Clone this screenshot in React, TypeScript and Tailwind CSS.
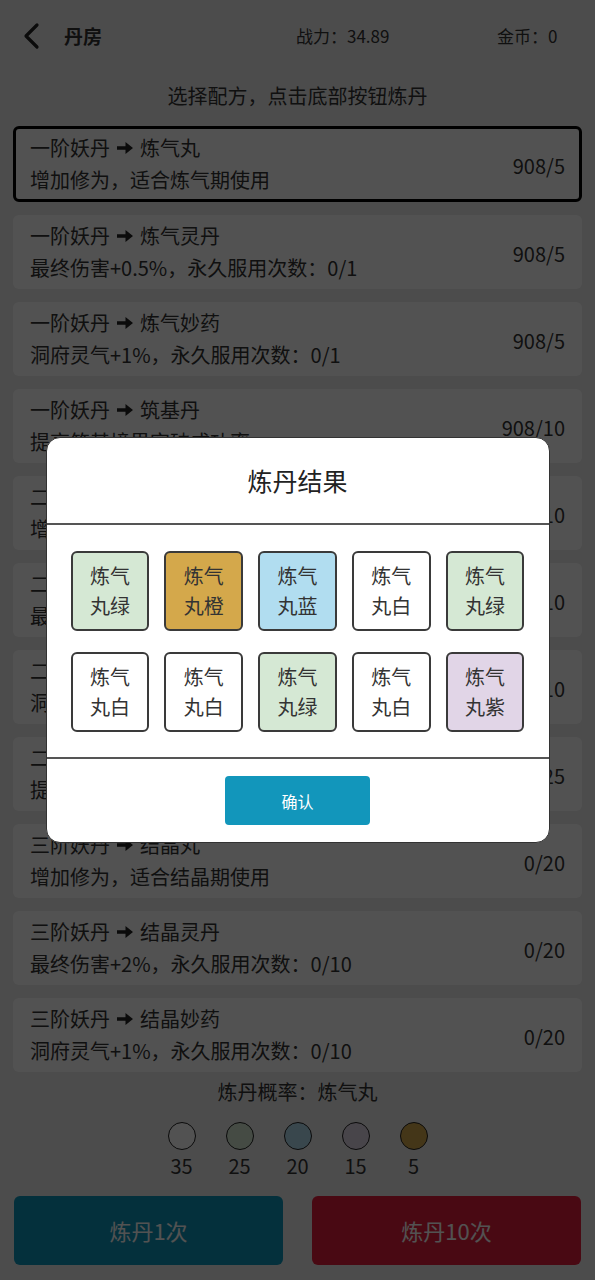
import React from "react";

const rows = [
  { from: "一阶妖丹", to: "炼气丸", desc: "增加修为，适合炼气期使用", num: "908/5" },
  { from: "一阶妖丹", to: "炼气灵丹", desc: "最终伤害+0.5%，永久服用次数：0/1", num: "908/5" },
  { from: "一阶妖丹", to: "炼气妙药", desc: "洞府灵气+1%，永久服用次数：0/1", num: "908/5" },
  { from: "一阶妖丹", to: "筑基丹", desc: "提高筑基境界突破成功率", num: "908/10" },
  { from: "二阶妖丹", to: "筑基丸", desc: "增加修为，适合筑基期使用", num: "0/10" },
  { from: "二阶妖丹", to: "筑基灵丹", desc: "最终伤害+1%，永久服用次数：0/5", num: "0/10" },
  { from: "二阶妖丹", to: "筑基妙药", desc: "洞府灵气+1%，永久服用次数：0/5", num: "0/10" },
  { from: "二阶妖丹", to: "结晶丹", desc: "提高结晶境界突破成功率", num: "0/25" },
  { from: "三阶妖丹", to: "结晶丸", desc: "增加修为，适合结晶期使用", num: "0/20" },
  { from: "三阶妖丹", to: "结晶灵丹", desc: "最终伤害+2%，永久服用次数：0/10", num: "0/20" },
  { from: "三阶妖丹", to: "结晶妙药", desc: "洞府灵气+1%，永久服用次数：0/10", num: "0/20" },
];

const colorMap: Record<string, string> = {
  绿: "bg-[#d5e8d4]",
  橙: "bg-[#d4a84b]",
  蓝: "bg-[#b1ddf0]",
  白: "bg-white",
  紫: "bg-[#e1d5e7]",
};

const results = ["绿", "橙", "蓝", "白", "绿", "白", "白", "绿", "白", "紫"];

const probs = [
  { c: "bg-white", n: "35" },
  { c: "bg-[#d5e8d4]", n: "25" },
  { c: "bg-[#b1ddf0]", n: "20" },
  { c: "bg-[#e1d5e7]", n: "15" },
  { c: "bg-[#d4a84b]", n: "5" },
];

function Arrow() {
  return (
    <svg width="18" height="16" viewBox="0 0 18 16" className="mx-[6px] shrink-0">
      <path d="M1 6.3 H9.5 V2 L17 8 L9.5 14 V9.7 H1 Z" fill="#222" />
    </svg>
  );
}

function Tile({ k }: { k: string }) {
  return (
    <div
      className={`w-[79px] h-[80px] rounded-[6px] border-2 border-[#3a3a3a] flex flex-col items-center justify-center text-[20px] leading-[30px] text-[#333] ${colorMap[k]}`}
    >
      <span>炼气</span>
      <span>丸{k}</span>
    </div>
  );
}

export default function App() {
  return (
    <div className="relative w-[595px] h-[1280px] overflow-hidden bg-[#ededed] text-[#333] font-['Noto_Sans_CJK_SC',sans-serif]">
      {/* header */}
      <div className="h-[72px] flex items-center pl-[22px]">
        <div className="w-[274px] flex items-center">
          <svg width="18" height="28" viewBox="0 0 18 28">
            <path d="M15 3 L4 14 L15 25" fill="none" stroke="#222" strokeWidth="3.2" strokeLinecap="round" strokeLinejoin="round" />
          </svg>
          <span className="ml-[24px] text-[19px] font-bold">丹房</span>
        </div>
        <span className="w-[201px] text-[17px]">战力：34.89</span>
        <span className="text-[17px]">金币：0</span>
      </div>
      {/* subtitle */}
      <div className="h-[48px] flex items-center justify-center text-[20px]">选择配方，点击底部按钮炼丹</div>
      {/* list */}
      <div className="px-[13px] mt-[6px] flex flex-col gap-[13px] h-[946px] overflow-hidden">
        {rows.map((r, i) => (
          <div
            key={i}
            className={`shrink-0 flex items-center justify-between bg-white rounded-[6px] ${
              i === 0 ? "h-[76px] border-[3px] border-black px-[14px]" : "h-[74px] px-[17px]"
            }`}
          >
            <div className="flex flex-col text-[20px] leading-[32px]">
              <div className="flex items-center">
                <span>{r.from}</span>
                <Arrow />
                <span>{r.to}</span>
              </div>
              <div>{r.desc}</div>
            </div>
            <div className="text-[20px] mt-[4px]">{r.num}</div>
          </div>
        ))}
      </div>
      {/* probability */}
      <div className="mt-[6px] h-[28px] flex items-center justify-center text-[20px]">炼丹概率：炼气丸</div>
      <div className="mt-[16px] flex justify-center">
        {probs.map((p, i) => (
          <div key={i} className="w-[58px] flex flex-col items-center">
            <div className={`w-[28px] h-[28px] rounded-full border-[1.5px] border-[#222] ${p.c}`} />
            <div className="mt-[4px] h-[24px] leading-[24px] text-[20px]">{p.n}</div>
          </div>
        ))}
      </div>
      <div className="mt-[18px] px-[14px] flex gap-[29px]">
        <div className="flex-1 h-[69px] rounded-[6px] bg-[#0f95ba] flex items-center justify-center text-white text-[22px]">炼丹1次</div>
        <div className="flex-1 h-[69px] rounded-[6px] bg-[#e31e3c] flex items-center justify-center text-white text-[22px]">炼丹10次</div>
      </div>

      {/* overlay */}
      <div className="absolute inset-0 bg-black/[0.68] flex items-center justify-center">
        <div className="w-[504px] bg-white rounded-[14px] border border-[#333] overflow-hidden">
          <div className="h-[85px] flex items-center justify-center text-[25px] text-[#222]">炼丹结果</div>
          <div className="h-[2px] bg-[#555]" />
          <div className="px-[24px] pt-[26px] pb-[25px] flex flex-col gap-[21px]">
            <div className="flex gap-[15px]">
              {results.slice(0, 5).map((k, i) => (
                <Tile key={i} k={k} />
              ))}
            </div>
            <div className="flex gap-[15px]">
              {results.slice(5).map((k, i) => (
                <Tile key={i} k={k} />
              ))}
            </div>
          </div>
          <div className="h-[2px] bg-[#555]" />
          <div className="pt-[17px] pb-[17px] flex justify-center">
            <div className="w-[145px] h-[49px] rounded-[4px] bg-[#1296bb] flex items-center justify-center text-white text-[16px]">确认</div>
          </div>
        </div>
      </div>
    </div>
  );
}
